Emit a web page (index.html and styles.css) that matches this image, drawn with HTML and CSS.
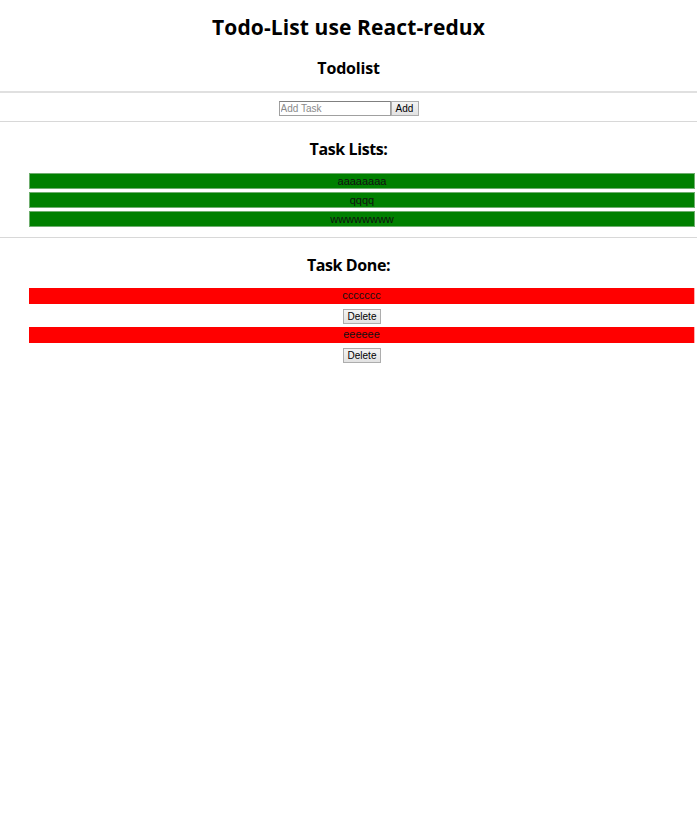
FILE: index.html
```html
<!DOCTYPE html>
<html>
<head>
<meta charset="utf-8">
<link rel="stylesheet" href="styles.css">
</head>
<body>
<h1 class="title">Todo-List use React-redux</h1>
<h2 class="sub">Todolist</h2>
<hr class="rule rule-top">
<form class="add-form">
  <input class="add-input" type="text" placeholder="Add Task">
  <button class="add-btn" type="button">Add</button>
</form>
<hr class="rule">
<h2 class="section">Task Lists:</h2>
<ul class="list">
  <li class="item todo">aaaaaaaa</li>
  <li class="item todo">qqqq</li>
  <li class="item todo">wwwwwwww</li>
</ul>
<hr class="rule">
<h2 class="section">Task Done:</h2>
<ul class="list done-list">
  <li class="done-row"><div class="item done">ccccccc</div><button class="del-btn" type="button">Delete</button></li>
  <li class="done-row"><div class="item done">eeeeee</div><button class="del-btn" type="button">Delete</button></li>
</ul>
</body>
</html>
```
FILE: styles.css
```css
html, body {
  margin: 0;
  padding: 0;
  background: #fff;
}
body {
  font-family: "Open Sans", "Noto Sans", sans-serif;
  color: #000;
  text-align: center;
}
.title {
  font-size: 21px;
  line-height: 28px;
  font-weight: 700;
  letter-spacing: 0.1px;
  margin: 13px 0 0;
}
.sub {
  font-size: 16px;
  line-height: 22px;
  font-weight: 700;
  letter-spacing: -0.2px;
  margin: 16px 0 0;
}
.rule {
  border: 0;
  border-top: 1px solid #d8d8d8;
  margin: 0;
  height: 0;
}
.rule-top {
  margin-top: 12px;
  border-top: 2px solid #e0e0e0;
}
.add-form {
  display: flex;
  justify-content: center;
  margin: 8px 0 5px;
}
.add-input {
  box-sizing: border-box;
  width: 112px;
  height: 15px;
  margin: 0;
  padding: 0 1px;
  border: 1px solid #a0a0a0;
  border-top-color: #808080;
  font-family: "Liberation Sans", Arial, sans-serif;
  font-size: 10px;
}
.add-input::placeholder {
  color: #8a8a8a;
}
.add-btn, .del-btn {
  box-sizing: border-box;
  height: 15px;
  margin: 0;
  padding: 0;
  border: 1px solid #adadad;
  background: linear-gradient(#f4f4f4, #e2e2e2);
  font-family: "Liberation Sans", Arial, sans-serif;
  font-size: 10px;
  line-height: 13px;
  color: #000;
}
.add-btn {
  width: 28px;
}
.section {
  font-size: 16px;
  line-height: 22px;
  font-weight: 700;
  letter-spacing: -0.4px;
  margin: 16px 0 0;
}
.list {
  list-style: none;
  margin: 13px 2px 10px 29px;
  padding: 0;
  display: flex;
  flex-direction: column;
  gap: 3px;
}
.item {
  box-sizing: border-box;
  height: 16px;
  font-family: "Liberation Sans", Arial, sans-serif;
  font-size: 11px;
  line-height: 14px;
  color: #111;
}
.todo {
  background: #008000;
  border: 1px solid #6fae6f;
}
.done-list {
  margin: 12px 0 0 0;
  gap: 3px;
}
.done-row {
  display: flex;
  flex-direction: column;
  align-items: center;
  gap: 5px;
  padding-left: 27px;
}
.done {
  align-self: stretch;
  margin: 0 2px 0 2px;
  background: #ff0000;
  border-right: 1px solid #ffb0b0;
}
.del-btn {
  width: 38px;
}
```
